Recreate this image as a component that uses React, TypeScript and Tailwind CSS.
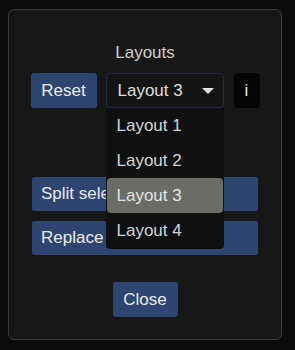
export default function App() {
  const items = ['Layout 1', 'Layout 2', 'Layout 3', 'Layout 4'];
  return (
    <div className="h-[350px] w-[295px] overflow-hidden bg-[#0b0b0b] pt-[9px] pl-[8px] font-['Liberation_Sans',Arial,sans-serif] text-[17px]">
      <div className="relative flex h-[331px] w-[274px] flex-col items-center rounded-[6px] border border-[#3b3b3b] bg-[#171717]">
        <div className="mt-[31px] leading-6 text-[#cfcfcf]">Layouts</div>
        <div className="mt-[8px] flex items-center">
          <button className="h-[35px] w-[66px] rounded-[3px] bg-[#2d4570] text-[#ececec]">Reset</button>
          <div className="relative ml-[9px]">
            <div className="flex h-[35px] w-[118px] items-center justify-between rounded-[4px] border border-[#1f2b3d] bg-[#141414] pl-[11px] pr-[9px] text-[#dedede]">
              <span>Layout 3</span>
              <svg width="12" height="6" viewBox="0 0 12 6">
                <path d="M0 0 L12 0 L6 6 Z" fill="#e0e0e0" />
              </svg>
            </div>
            <div className="absolute left-0 top-[35px] z-10 w-[118px] rounded-b-[4px] bg-[#101010] px-[1px] pb-[1px]">
              {items.map((it) => (
                <div
                  key={it}
                  className={
                    it === 'Layout 3'
                      ? 'flex h-[35px] items-center rounded-[4px] bg-[#6b6b68] pl-[10px] text-[#e4e4e4]'
                      : 'flex h-[35px] items-center pl-[10px] text-[#d4d4d4]'
                  }
                >
                  {it}
                </div>
              ))}
            </div>
          </div>
          <button className="ml-[10px] h-[35px] w-[26px] rounded-[4px] bg-[#050505] text-[#e8e8e8]">i</button>
        </div>
        <button className="mt-[69px] h-[34px] w-[226px] rounded-[2px] bg-[#2d4570] pl-[9px] text-left text-[#ececec]">Split selection</button>
        <button className="mt-[10px] h-[34px] w-[226px] rounded-[2px] bg-[#2d4570] pl-[9px] text-left text-[#ececec]">Replace selection</button>
        <button className="mt-[27px] h-[35px] w-[65px] rounded-[3px] bg-[#2d4570] text-[#ececec]">Close</button>
      </div>
    </div>
  );
}
